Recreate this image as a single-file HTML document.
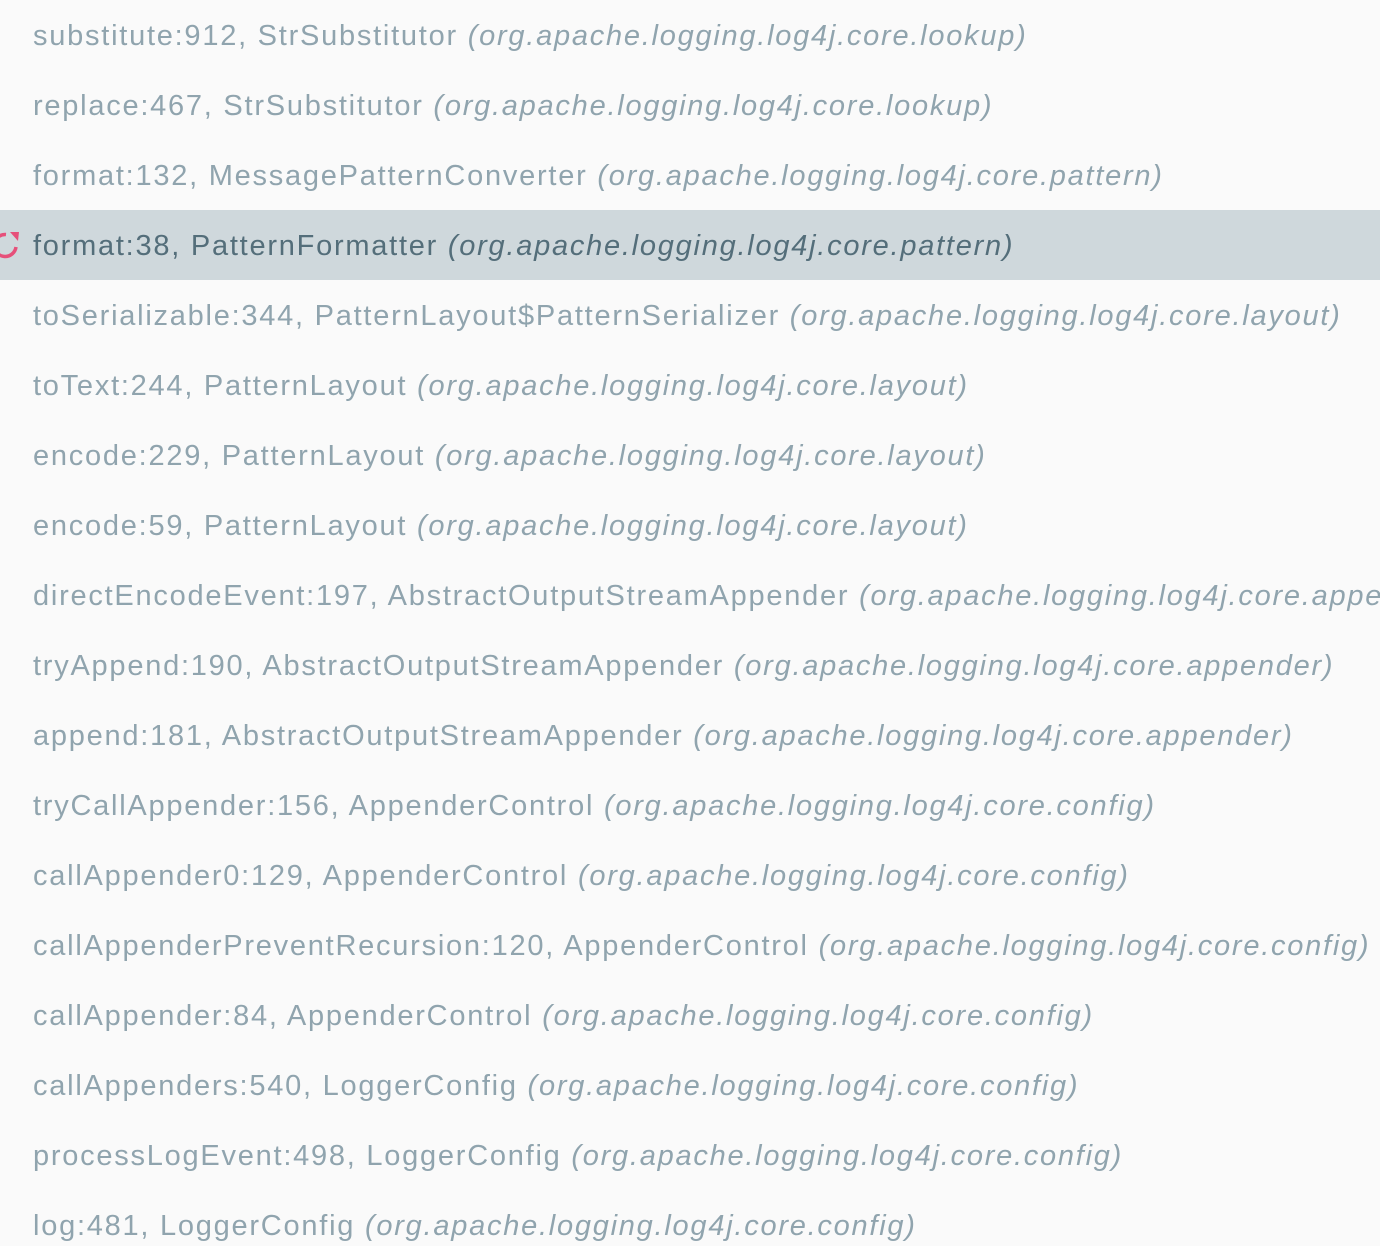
<!DOCTYPE html>
<html><head><meta charset="utf-8"><style>
html,body{margin:0;padding:0;background:#fafafa;width:1380px;height:1246px;overflow:hidden}
.r{height:70px;line-height:72px;padding-left:33px;white-space:nowrap;font-family:"Liberation Sans",sans-serif;font-size:29px;letter-spacing:1.75px;color:#90a4ae;position:relative;overflow:hidden}
.r i{font-style:italic}
.s{background:#cfd8dc;color:#546e7a}
.ic{position:absolute;left:0;top:15px}
</style></head><body>
<div class="r">substitute:912, StrSubstitutor <i>(org.apache.logging.log4j.core.lookup)</i></div>
<div class="r">replace:467, StrSubstitutor <i>(org.apache.logging.log4j.core.lookup)</i></div>
<div class="r">format:132, MessagePatternConverter <i>(org.apache.logging.log4j.core.pattern)</i></div>
<div class="r s"><svg class="ic" width="30" height="40" viewBox="0 0 30 40"><path d="M6 9.5 A11 11 0 1 0 16 22" fill="none" stroke="#e6507a" stroke-width="3.5"/><path d="M10 7 L19 7 L18 16 Z" fill="#e6507a"/></svg>format:38, PatternFormatter <i>(org.apache.logging.log4j.core.pattern)</i></div>
<div class="r">toSerializable:344, PatternLayout$PatternSerializer <i>(org.apache.logging.log4j.core.layout)</i></div>
<div class="r">toText:244, PatternLayout <i>(org.apache.logging.log4j.core.layout)</i></div>
<div class="r">encode:229, PatternLayout <i>(org.apache.logging.log4j.core.layout)</i></div>
<div class="r">encode:59, PatternLayout <i>(org.apache.logging.log4j.core.layout)</i></div>
<div class="r">directEncodeEvent:197, AbstractOutputStreamAppender <i>(org.apache.logging.log4j.core.appender)</i></div>
<div class="r">tryAppend:190, AbstractOutputStreamAppender <i>(org.apache.logging.log4j.core.appender)</i></div>
<div class="r">append:181, AbstractOutputStreamAppender <i>(org.apache.logging.log4j.core.appender)</i></div>
<div class="r">tryCallAppender:156, AppenderControl <i>(org.apache.logging.log4j.core.config)</i></div>
<div class="r">callAppender0:129, AppenderControl <i>(org.apache.logging.log4j.core.config)</i></div>
<div class="r">callAppenderPreventRecursion:120, AppenderControl <i>(org.apache.logging.log4j.core.config)</i></div>
<div class="r">callAppender:84, AppenderControl <i>(org.apache.logging.log4j.core.config)</i></div>
<div class="r">callAppenders:540, LoggerConfig <i>(org.apache.logging.log4j.core.config)</i></div>
<div class="r">processLogEvent:498, LoggerConfig <i>(org.apache.logging.log4j.core.config)</i></div>
<div class="r">log:481, LoggerConfig <i>(org.apache.logging.log4j.core.config)</i></div>
</body></html>
